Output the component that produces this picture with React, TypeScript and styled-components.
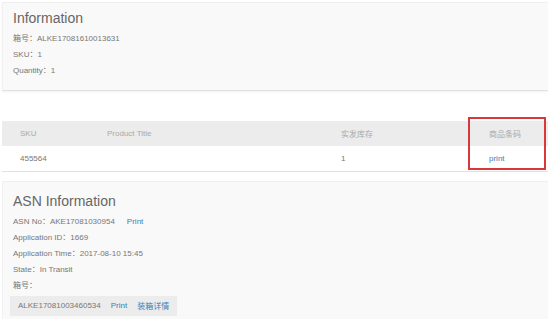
import React from "react";
import styled, { createGlobalStyle } from "styled-components";

const GlobalStyle = createGlobalStyle`
  html, body {
    margin: 0;
    padding: 0;
    background: #ffffff;
  }
  body {
    font-family: "Liberation Sans", "Noto Sans CJK SC", Arial, sans-serif;
    color: #777;
  }
`;

const Page = styled.div`
  width: 548px;
  height: 319px;
  overflow: hidden;
  padding: 2px 0 0 2px;
  box-sizing: border-box;
`;

const Card = styled.section<{ $top?: boolean }>`
  background: #f9f9f9;
  border-top: 1px solid #efefef;
  border-left: 1px solid #f1f1f1;
  ${(p) =>
    p.$top
      ? `border-bottom: 1px solid #e2e2e2; box-shadow: 0 1px 2px rgba(0,0,0,0.06);`
      : ""}
  padding: ${(p) => (p.$top ? "5px 10px 11px" : "9px 10px 6px")};
`;

const Title = styled.h2<{ $gap?: number }>`
  margin: 0 0 ${(p) => p.$gap ?? 3}px;
  font-size: 14px;
  line-height: 20px;
  font-weight: normal;
  color: #666;
`;

const Line = styled.div`
  font-size: 8px;
  line-height: 16px;
  color: #777;
  white-space: nowrap;
`;

const Link = styled.span<{ $gap?: number }>`
  color: #3b7db8;
  margin-left: ${(p) => p.$gap ?? 0}px;
`;

const TableWrap = styled.div`
  position: relative;
  margin-top: 30px;
`;

const Row = styled.div<{ $head?: boolean }>`
  display: grid;
  grid-template-columns: 87px 234px 148px 1fr;
  align-items: center;
  height: 25px;
  padding-left: 18px;
  font-size: 8px;
  background: ${(p) => (p.$head ? "#ececec" : "#ffffff")};
  color: ${(p) => (p.$head ? "#a9a9a9" : "#777")};
  border-bottom: ${(p) => (p.$head ? "none" : "1px solid #e2e2e2")};
`;

const Highlight = styled.div`
  position: absolute;
  left: 466px;
  top: -4px;
  width: 78px;
  height: 53px;
  box-sizing: border-box;
  border: 2px solid #d9383a;
  pointer-events: none;
`;

const Spacer = styled.div`
  height: 9px;
`;

const BoxRow = styled.div`
  display: inline-flex;
  align-items: center;
  gap: 10px;
  height: 20px;
  padding: 0 8px;
  margin: -2px 0 0 -3px;
  background: #ececec;
  font-size: 8px;
  color: #777;
`;

export default function App() {
  return (
    <>
      <GlobalStyle />
      <Page>
        <Card $top>
          <Title $gap={3}>Information</Title>
          <Line>箱号：ALKE17081610013631</Line>
          <Line>SKU：1</Line>
          <Line>Quantity：1</Line>
        </Card>

        <TableWrap>
          <Row $head>
            <span>SKU</span>
            <span>Product Title</span>
            <span>实发库存</span>
            <span>商品条码</span>
          </Row>
          <Row>
            <span>455564</span>
            <span></span>
            <span>1</span>
            <Link>print</Link>
          </Row>
          <Highlight />
        </TableWrap>

        <Spacer />

        <Card>
          <Title $gap={3}>ASN Information</Title>
          <Line>
            ASN No：AKE17081030954<Link $gap={12}>Print</Link>
          </Line>
          <Line>Application ID：1669</Line>
          <Line>Application Time：2017-08-10 15:45</Line>
          <Line>State：In Transit</Line>
          <Line>箱号：</Line>
          <BoxRow>
            <span>ALKE17081003460534</span>
            <Link>Print</Link>
            <Link>装箱详情</Link>
          </BoxRow>
        </Card>
      </Page>
    </>
  );
}
